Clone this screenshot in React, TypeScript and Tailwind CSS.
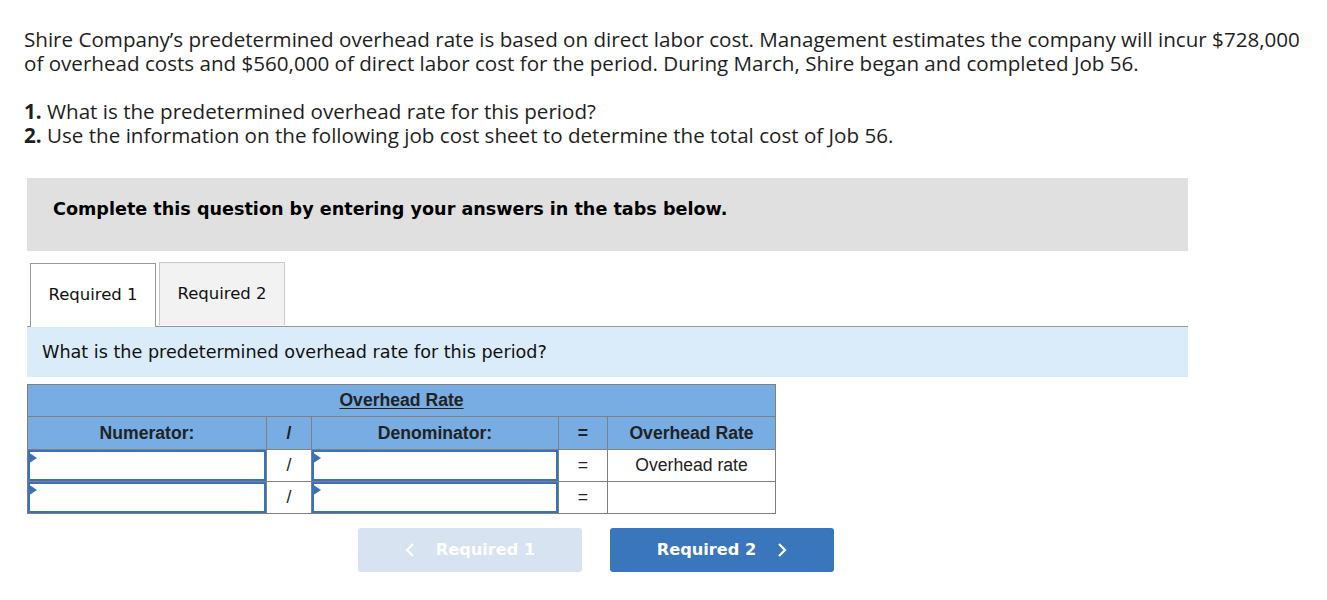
import React from "react";

const verdana = { fontFamily: '"DejaVu Sans", Verdana, sans-serif' };

function InputCell({ w }: { w: string }) {
  return (
    <td className={`relative h-[32px] border border-[#808080] p-0 ${w}`}>
      <div className="absolute inset-0 border-2 border-[#3c72b4]" />
      <div className="absolute left-0 top-[2px] h-0 w-0 border-y-[6px] border-l-[9px] border-y-transparent border-l-[#3c72b4]" />
    </td>
  );
}

export default function App() {
  return (
    <div className="min-h-[600px] bg-white">
      <div className="whitespace-nowrap px-[24px] pt-[27px] text-[20.6px] leading-[24px] text-[#1e1e1e] font-['Open_Sans',sans-serif]">
        <p>
          Shire Company’s predetermined overhead rate is based on direct labor cost. Management estimates the company will incur $728,000
          <br />
          of overhead costs and $560,000 of direct labor cost for the period. During March, Shire began and completed Job 56.
        </p>
        <p className="mt-[24px]">
          <b>1.</b> What is the predetermined overhead rate for this period?
        </p>
        <p>
          <b>2.</b> Use the information on the following job cost sheet to determine the total cost of Job 56.
        </p>
      </div>

      <div className="ml-[27px] mt-[31px] w-[1161px]" style={verdana}>
        <div className="h-[73px] bg-[#e0e0e0] pl-[26px] pt-[19px] text-[17.6px] leading-[24px] font-bold text-black">
          Complete this question by entering your answers in the tabs below.
        </div>

        <div className="mt-[11px] flex gap-[3px] pl-[3px]">
          <div className="relative top-[1px] flex h-[64px] w-[126px] items-center justify-center border border-b-0 border-[#999] bg-white text-[16.5px] text-[#111]">
            Required 1
          </div>
          <div className="flex h-[63px] w-[126px] items-center justify-center border border-b-0 border-[#c8c8c8] bg-[#f2f2f2] text-[16.5px] text-[#111]">
            Required 2
          </div>
        </div>
        <div className="border-t border-[#999]" />
        <div className="flex h-[50px] items-center bg-[#daebf9] pl-[15px] text-[17.6px] text-[#111]">
          What is the predetermined overhead rate for this period?
        </div>

        <table className="mt-[7px] border-collapse font-['Liberation_Sans',Arial,sans-serif] text-[17.6px] text-[#222]">
          <tbody>
            <tr className="h-[32px] bg-[#78ade3]">
              <th colSpan={5} className="h-[32px] border border-[#808080] p-0 font-bold">
                <span className="underline underline-offset-2">Overhead Rate</span>
              </th>
            </tr>
            <tr className="bg-[#78ade3] font-bold">
              <th className="h-[33px] w-[239px] border border-[#808080] p-0">Numerator:</th>
              <th className="w-[45px] border border-[#808080] p-0">/</th>
              <th className="w-[247px] border border-[#808080] p-0">Denominator:</th>
              <th className="w-[49px] border border-[#808080] p-0">=</th>
              <th className="w-[168px] border border-[#808080] p-0">Overhead Rate</th>
            </tr>
            <tr>
              <InputCell w="w-[239px]" />
              <td className="border border-[#808080] p-0 text-center">/</td>
              <InputCell w="w-[247px]" />
              <td className="border border-[#808080] p-0 text-center">=</td>
              <td className="border border-[#808080] p-0 text-center">Overhead rate</td>
            </tr>
            <tr>
              <InputCell w="w-[239px]" />
              <td className="border border-[#808080] p-0 text-center">/</td>
              <InputCell w="w-[247px]" />
              <td className="border border-[#808080] p-0 text-center">=</td>
              <td className="border border-[#808080] p-0" />
            </tr>
          </tbody>
        </table>

        <div className="mt-[14px] flex gap-[28px] pl-[331px]">
          <button className="flex h-[44px] w-[224px] items-center justify-center gap-[21px] rounded-[3px] bg-[#d7e3f1] text-[16.2px] font-bold text-white">
            <svg width="10" height="14" viewBox="0 0 10 14" fill="none" stroke="white" strokeWidth="2.2">
              <path d="M8 1 L2 7 L8 13" />
            </svg>
            Required 1
          </button>
          <button className="flex h-[44px] w-[224px] items-center justify-center gap-[21px] rounded-[3px] bg-[#3a76bb] text-[16.2px] font-bold text-white">
            Required 2
            <svg width="10" height="14" viewBox="0 0 10 14" fill="none" stroke="white" strokeWidth="2.2">
              <path d="M2 1 L8 7 L2 13" />
            </svg>
          </button>
        </div>
      </div>
    </div>
  );
}
